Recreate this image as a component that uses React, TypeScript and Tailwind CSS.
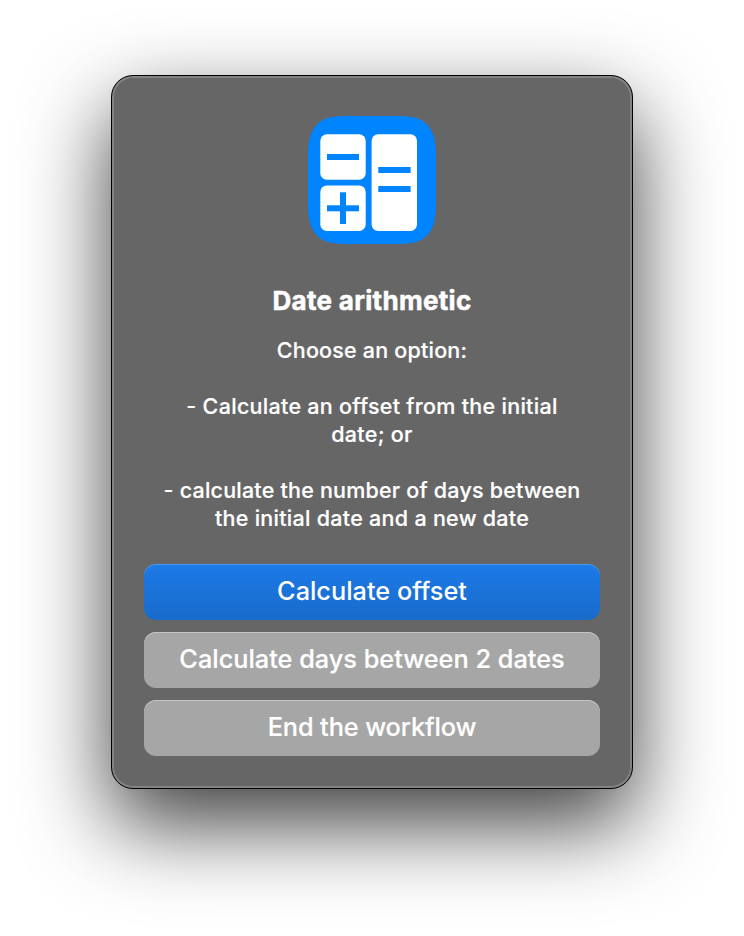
function CalculatorIcon() {
  return (
    <svg className="h-32 w-32" viewBox="0 0 128 128" role="img" aria-label="Calculator">
      <path
        d="M40 0H88C102 0 112 1.500 118.500 8C126 15.500 128 26 128 40V88C128 102 126 112.500 118.500 120C112 126.500 102 128 88 128H40C26 128 16 126.500 9.500 120C2 112.500 0 102 0 88V40C0 26 2 15.500 9.500 8C16 1.500 26 0 40 0Z"
        fill="#0084ff"
      />
      <g fill="#fff">
        <rect x="12.300" y="18.300" width="45.400" height="45.400" rx="6.500" />
        <rect x="12.300" y="69.400" width="45.400" height="45.600" rx="6.500" />
        <rect x="63.600" y="18.300" width="45.400" height="96.700" rx="6.500" />
      </g>
      <g fill="#0084ff">
        <rect x="19" y="38" width="32" height="6" />
        <rect x="19" y="89.300" width="32" height="6" />
        <rect x="32" y="76.300" width="6" height="31.700" />
        <rect x="70.300" y="51" width="32.300" height="6" />
        <rect x="70.300" y="70" width="32.300" height="6" />
      </g>
    </svg>
  );
}

const buttonBase =
  "flex h-14 w-full items-center justify-center whitespace-nowrap rounded-xl pb-[2px] text-[25.300px] font-medium text-white";

export default function App() {
  return (
    <main className="flex h-[936px] w-[744px] items-start justify-center overflow-hidden bg-white pt-[75px] font-['Inter',sans-serif]">
      <section className="flex h-[714px] w-[522px] flex-col items-center rounded-[22px] border border-black bg-[#666666] px-8 pt-10 text-center text-white shadow-[inset_0_0_0_2px_#838383,0_35px_86px_rgba(0,0,0,0.76)]">
        <CalculatorIcon />
        <h1 className="mt-[41px] whitespace-nowrap text-[26px] leading-8 font-bold">
          <span className="tracking-[0.300px] [-webkit-text-stroke:0.500px_white]">Date arithmetic</span>
        </h1>
        <div className="mt-[19px] text-[21.500px] leading-7 font-medium whitespace-nowrap [-webkit-text-stroke:0.200px_white]">
          <p><span className="tracking-[0.200px]">Choose an option:</span></p>
          <p className="mt-7">
            <span className="tracking-[0.290px]">- Calculate an offset from the initial</span>
            <br />
            <span className="tracking-[0.300px]">date; or</span>
          </p>
          <p className="mt-7">
            <span className="tracking-[0.210px]">- calculate the number of days between</span>
            <br />
            <span className="tracking-[0.280px]">the initial date and a new date</span>
          </p>
        </div>
        <div className="mt-8 flex w-full flex-col gap-3">
          <button className={`${buttonBase} bg-linear-to-b from-[#1d7ae8] to-[#186bca] shadow-[inset_0_1px_0_#4d98ed]`}>
            <span>Calculate offset</span>
          </button>
          <button className={`${buttonBase} bg-[#a6a6a6] shadow-[inset_0_1px_0_#c5c5c5]`}>
            <span className="[-webkit-text-stroke:0.200px_white]">Calculate days between 2 dates</span>
          </button>
          <button className={`${buttonBase} bg-[#a6a6a6] shadow-[inset_0_1px_0_#c5c5c5]`}>
            <span className="tracking-[-0.100px] [-webkit-text-stroke:0.200px_white]">End the workflow</span>
          </button>
        </div>
      </section>
    </main>
  );
}
